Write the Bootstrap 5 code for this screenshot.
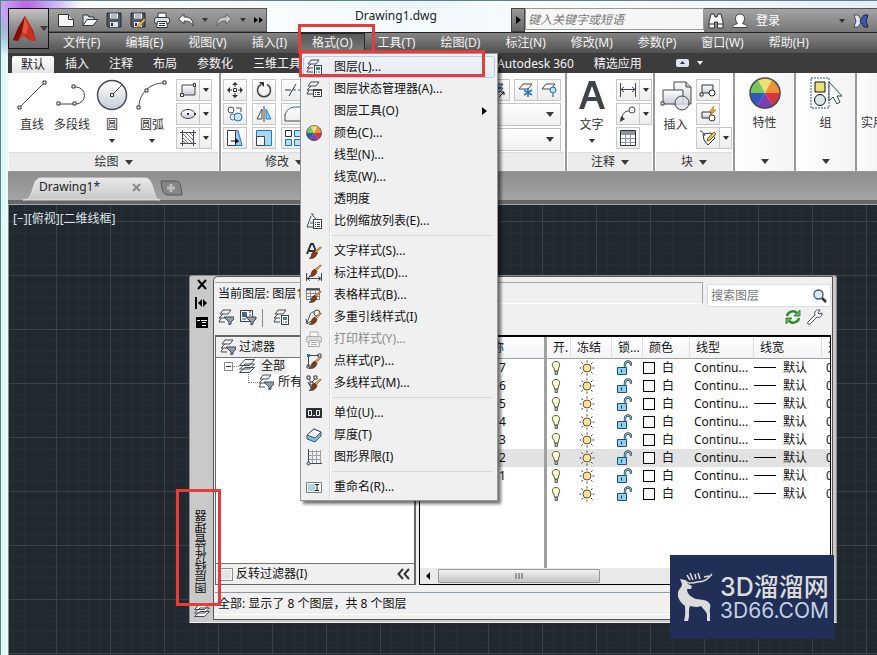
<!DOCTYPE html>
<html lang="zh-CN">
<head>
<meta charset="utf-8">
<meta name="viewport" content="width=device-width, initial-scale=1">
<title>Drawing1.dwg</title>
<link href="https://cdn.jsdelivr.net/npm/bootstrap@5.3.0/dist/css/bootstrap.min.css" rel="stylesheet">
<style>
body{font-family:"Noto Sans","Noto Sans CJK SC",sans-serif;font-size:12px;line-height:16px;color:#111;min-height:100vh;padding:7px 0 0 7px;overflow:hidden;
 background:radial-gradient(circle at 26px 6px,#c060e8 0,#c8a0f4 22px,transparent 56px),radial-gradient(circle at 4px 26px,#40e890 0,#a0f8d8 16px,transparent 28px),linear-gradient(90deg,#e0fbfb,#fff 12%,#eaf3fb 50%,#fff 60%,#e4eef8);border-top:1px solid #5c8290;border-left:1px solid #5c8290;margin:0}
button,input{font:inherit;color:inherit}
button{background:none;border:0;padding:0;line-height:16px}
svg{display:block;flex:none;overflow:visible}
.ln{fill:none;stroke:#444a55;stroke-width:1}
.ic{width:16px;height:16px}
.app-btn{width:41px;height:41px;border:1px solid #111;background:linear-gradient(#c4c4c4,#8a8a8a 50%,#686868)}
.hdr{background:#585858}
.qat{width:218px;height:24px;padding-left:9px;gap:8px;background:linear-gradient(#a2a2a2,#7c7c7c);border:1px solid #555;border-left:0}
.crt{width:0;height:0;border:3px solid transparent;border-top:4px solid #333;border-bottom:0;flex:none}
.crt-l{border-width:4px;border-top-width:5px;border-bottom:0;border-top-color:#3a3a3a}
.title-row{height:24px;background:linear-gradient(90deg,#fdfeff,#f2fafe 50%,#fff)}
.title-txt{padding-left:14px;font-size:12px;color:#222}
.s-arrow{width:14px;height:24px;background:linear-gradient(#999,#666);border:1px solid #444}
.s-in{width:179px;height:22px;border:1px solid #999;background:#f6f6f6;font-style:italic;padding:0 2px;border-radius:0;outline:0}
.s-in::placeholder{color:#777;opacity:1}
.login{width:173px;height:24px;background:linear-gradient(#a4a4a4,#777);color:#fff;padding-left:4px;border-top:1px solid #555}
.menus{height:21px;background:linear-gradient(#858585,#505050);border-top:1px solid #222;padding-left:2px;gap:1px}
.menus .mb{height:20px;padding:0 12px;color:#f2f2f2;line-height:20px}
.menus .mb.open{background:linear-gradient(#555,#7c7c7c);box-shadow:inset 0 0 0 1px #2a2a2a}
.tabs{height:20px;background:#3c3c3c;padding-left:4px}
.tabs a{color:#f4f4f4;text-decoration:none;padding:0 10px;height:20px;line-height:21px;white-space:nowrap}
.tabs a.on{background:linear-gradient(#fff,#e4e4e4);color:#222;padding:0 9px;margin-right:1px;border-radius:2px 2px 0 0;height:17px;line-height:17px;align-self:flex-end;width:42px}
.tab-gap{width:176px}
.ribbon{height:99px;background:#fff;color:#333;border-bottom:1px solid #999}
.pnl{border-right:2px solid #999;background:#fff}
.pnl-b{height:79px;padding-top:6px}
.pnl-t{height:19px;background:#ececec;margin:0 1px;gap:6px;border-top:1px solid #ddd}
.w-draw{width:213px}.w-mod{width:128px}.w-lay{width:218px}.w-ann{width:88px}.w-blk{width:80px}.w-one{width:61px}
.big{width:41px;gap:6px}
.w-draw .big{width:40px}
.big svg{width:32px;height:32px}
.sm{height:22px;border:1px solid #c8c8c8;background:linear-gradient(#fff,#ececec)}
.sm .a{width:22px;display:flex;justify-content:center}
.sm .b{width:12px;height:20px;border-left:1px solid #c8c8c8;display:flex;align-items:center;justify-content:center}
.stack{gap:2px}
.mods{gap:5px;padding-left:2px}
.one{background:linear-gradient(90deg,#fff,#f4f4f4);padding-top:4px;gap:6px}
.one .crt{margin-top:auto;margin-bottom:7px}
.one.util{padding-top:42px}
.combo{height:23px;border:1px solid #c4c4c4;border-radius:0;background:linear-gradient(#fff,#f0f0f0);padding-right:6px}
.files{height:28px;background:linear-gradient(#8e8e8e,#a4a4a4);padding-left:15px}
.ftab{width:137px;height:24px}
.ftab span{left:16px;top:3px;font-size:12px}
.band{height:5px;background:#666;border-bottom:1px solid #a5a5a5}
.stage{background-color:#212830;border-left:1px solid #888;
 background-image:linear-gradient(90deg,#3a424a 1px,transparent 1px),linear-gradient(#3a424a 1px,transparent 1px),
 linear-gradient(90deg,transparent 11px,#262e37 11px 12px,transparent 12px 22px,#262e37 22px 23px,transparent 23px 32px,#262e37 32px 33px,transparent 33px 43px,#262e37 43px 44px,transparent 44px),
 linear-gradient(transparent 11px,#262e37 11px 12px,transparent 12px 22px,#262e37 22px 23px,transparent 23px 32px,#262e37 32px 33px,transparent 33px 43px,#262e37 43px 44px,transparent 44px);
 background-size:54px 54px;background-position:47px 16px}
.view-l{color:#dfe3e8;padding:6px 4px}
.pal{left:180px;top:70px;width:648px;background:#c9c9c9;border:1px solid #8c8c8c;border-bottom-color:#eee;padding-right:3px;padding-bottom:2px;border-radius:3px 3px 0 0}
.rail{width:23px;padding:4px 0 2px}
.vt{writing-mode:vertical-rl;transform:rotate(180deg);line-height:18px;color:#111}
.pb{background:#f0f0f0;border:1px solid #555;border-radius:5px 0 0 0;padding:5px 1px 0;min-width:0}
.cur{height:22px;border:1px solid #a8a8a8;border-left:0;border-bottom-color:#fff;padding-left:3px;line-height:22px;margin-right:4px}
.find{width:124px;height:23px;margin-top:2px;border:1px solid #ddd;background:#fff;padding:0 3px}
.find input{width:96px;border:0;outline:0;padding:0;background:none}
.find input::placeholder{color:#777;opacity:1}
.tb{height:28px;gap:6px;padding:2px 8px 0 3px}
.vsep{width:1px;height:18px;background:#888}
.tree{width:201px;height:250px;border:1px solid #666;border-width:2px 2px 1px 1px;background:#fff;margin-right:3px}
.tree-h{height:21px;background:#f0f0f0;border-bottom:1px solid #777;padding-left:4px;gap:3px}
.tree-f{height:21px;background:#f0f0f0;border-top:1px solid #777;padding-left:4px}
.tree-f input{width:13px;height:13px;margin:0 3px 0 0;appearance:none;background:#e4e4e4;border:1px solid #8f8f8f;box-shadow:inset 0 0 0 1px #f6f6f6}
.node{background:#eee;padding:0 2px;margin-left:4px}
.exp{width:9px;height:9px;border:1px solid #8a8a9a;background:#fff}
.exp::after{content:"";display:block;width:5px;height:1px;background:#335;margin:3px auto}
.dots{border-top:1px dotted #888;width:6px}
.elb{border-left:1px dotted #888;border-bottom:1px dotted #888;width:10px;height:9px;align-self:flex-start}
.grid-w{height:250px;border:1px solid #000;border-top-width:2px;background:#fff;overflow:hidden}
.lt{width:420px;table-layout:fixed;border-collapse:separate;border-spacing:0}
.lt th{height:22px;background:linear-gradient(#fff,#f2f3f5);border-bottom:1px solid #a0a0a0;border-right:1px solid #dcdcdc;font-weight:400;padding:0 0 0 6px;white-space:nowrap;overflow:hidden}
.lt td{height:18px;padding:0 0 0 4px;white-space:nowrap;overflow:hidden;line-height:18px}
.lt th:first-child,.lt td:first-child{border-right:3px solid #a0a0a0}
.lt th:first-child{padding-left:60px}.lt td:first-child{padding-left:55px}
.lt tr.sel td{background:#e2e2e2}
.lt tr.fill td{height:65px}
.sw{display:inline-block;width:12px;height:12px;border:1px solid #000;background:#fff;vertical-align:-2px;margin-right:7px}
.lw{display:inline-block;width:22px;height:1px;background:#000;vertical-align:4px;margin-right:7px}
.sb{height:16px;background:#e9e9e9;padding-left:6px;gap:8px}
.thumb{width:162px;height:14px;border:1px solid #979797;border-radius:1px;background:linear-gradient(#f4f4f4,#dadada 50%,#c8c8c8)}
.status{height:23px;border-top:1px solid #8c9aa4;border-bottom:1px solid #fff;padding-left:3px;margin:7px 0 4px;line-height:22px}
.drop{left:0;top:20px;width:198px;padding:2px;background:#f0f0f0;border:1px solid #979797;box-shadow:3px 3px 3px rgba(0,0,0,.55);z-index:20;
 background-image:linear-gradient(90deg,transparent 28px,#dcdcdc 28px 29px,#fff 29px 30px,transparent 30px);color:#111}
.drop button{height:22px;padding-left:3px;gap:12px;width:100%;white-space:nowrap}
.drop button.hot{border:1px solid #aecff7;border-radius:3px;background:linear-gradient(rgba(240,244,250,.6),rgba(222,232,246,.6));padding-left:2px}
.drop .dis{color:#8c8c8c}
.drop hr{margin:3px 2px 4px 29px;border-top:1px solid #d8d8d8;opacity:1;color:inherit}
.red{border:3px solid #e63c3c;z-index:30;pointer-events:none}
.r1{left:-2px;top:-9px;width:77px;height:29px}
.r2{left:-1px;top:17px;width:186px;height:27px}
.r3{left:-14px;top:213px;width:45px;height:117px}
.wm{right:43px;top:350px;width:164px;height:84px;background:#212f57;color:#dcdcdc;padding-left:6px;font-family:Inter,"Noto Sans CJK SC",sans-serif;z-index:10}
.wm1{font-size:25px;line-height:28px;font-weight:500}
.wm2{font-size:21px;line-height:20px;color:#c3d0e6}
</style>
</head>
<body class="d-flex flex-column">
<svg width="0" height="0" class="position-absolute" aria-hidden="true">
 <defs>
 <linearGradient id="g1" x2="0" y2="1"><stop stop-color="#fff"/><stop offset="1" stop-color="#c6cdd6"/></linearGradient>
 <linearGradient id="g2" x2="0" y2="1"><stop stop-color="#e8e8e8"/><stop offset="1" stop-color="#c8c8c8"/></linearGradient>
 </defs>
 <symbol id="lay" viewBox="0 0 16 16"><path class="ln" d="M5 1h8l-3 4H2zM5 5L1 9h6M3 9l-2 4h6"/></symbol>
 <symbol id="layf" viewBox="0 0 16 16"><use href="#lay"/><path d="M6 8h10v2l-3 3v2l-2 1v-3L8 10z" fill="#8fa0b4" stroke="#3b4552"/></symbol>
 <symbol id="layp" viewBox="0 0 16 16"><use href="#lay"/><rect x="8.500" y="6.500" width="7" height="9" fill="#fff" stroke="#3b4552"/><path d="M10 8h4v3h-4z" fill="#3c78c0"/><path d="M10 13h1M12 13h2" stroke="#3b4552"/></symbol>
 <symbol id="layl" viewBox="0 0 16 16"><use href="#lay"/><rect x="7.500" y="8.500" width="8" height="7" fill="#fff" stroke="#3b4552"/><path d="M7 9h9" stroke="#3b4552" stroke-width="2"/><path d="M9 11.500h1M11 11.500h3M9 13.500h1M11 13.500h3" stroke="#3b4552"/></symbol>
 <symbol id="stk" viewBox="0 0 16 16"><path d="M6 9.500h9.500l-5 5H.5zM6 6h9.500l-5 5H.5zM6 1.500h9.500l-5 6H.5z" fill="#f4f4f4" stroke="#444a55"/></symbol>
 <symbol id="whl" viewBox="0 0 32 32"><circle cx="16" cy="16" r="15" fill="#eee"/><path d="M16 16L9 3a15 15 0 0 1 14 0z" fill="#f0e070"/><path d="M16 16L23 3a15 15 0 0 1 8 13z" fill="#ef9436"/><path d="M16 16h15a15 15 0 0 1-7 13z" fill="#d8343c"/><path d="M16 16l8 13a15 15 0 0 1-16 0z" fill="#7a3fb0"/><path d="M16 16L8 29a15 15 0 0 1-7-13z" fill="#2f58c0"/><path d="M16 16H1A15 15 0 0 1 9 3z" fill="#76c65c"/><circle cx="16" cy="16" r="15" fill="none" stroke="#4a4a55" stroke-width="1.500"/></symbol>
 <symbol id="br" viewBox="0 0 16 16"><path d="M15.500 4.500l-6 6-1.500-1.500 6-5z" fill="#eba04a" stroke="#8a4a1a" stroke-width=".6"/><path d="M9 8.500l2 2c-1 4-4 5.500-8 5 2-1 2-2 2.500-4 .7-2 2-3 3.500-3z" fill="#74401f" stroke="#472410" stroke-width=".6"/></symbol>
 <symbol id="prn" viewBox="0 0 16 16"><path d="M4 6V1h8v5" fill="#fff" stroke="currentColor"/><rect x=".5" y="5.500" width="15" height="6" rx="2" fill="#ddd" stroke="currentColor"/><path d="M3.500 9.500h9l1 6h-11z" fill="#fff" stroke="currentColor"/><path d="M5 11.500h6M5 13.500h6" stroke="currentColor"/></symbol>
 <symbol id="sav" viewBox="0 0 16 16"><path d="M1 1h14v14H2l-1-1z" fill="#4c5866" stroke="#222a33"/><path d="M4 1.500h8v5H4z" fill="#fff"/><path d="M5 3h6M5 5h6" stroke="#778"/><path d="M4 10h8v5H4z" fill="#dde2e8"/><path d="M5 11h2v3H5z" fill="#333"/></symbol>
 <symbol id="und" viewBox="0 0 16 16"><path d="M6 2v3c6 0 9 2 9 9-2-4-4-5-9-5v3L.5 7z" fill="#f4f6f8" stroke="#444"/></symbol>
 <symbol id="bulb" viewBox="0 0 10 16"><path d="M5 1.500c4 0 4.500 4 2.500 6.500L7 11H3.500L3 8C0 5.500 1 1.500 5 1.500z" fill="#fffcd0" stroke="#5a5a40"/><path d="M4 11.500h2.500v3H4z" fill="#bbb" stroke="#444" stroke-width=".8"/></symbol>
 <symbol id="sun" viewBox="0 0 16 16"><circle cx="8" cy="8" r="4" fill="#fbe29b" stroke="#6a5530"/><path d="M8 .5v2M8 13.500v2M.5 8h2M13.500 8h2M2.500 2.500L4 4M12 12l1.500 1.500M2.500 13.500L4 12M12 4l1.500-1.500" stroke="#444"/></symbol>
 <symbol id="lck" viewBox="0 0 16 16"><path d="M1.500 7.500h9v7h-9z" fill="#8fd0f0" stroke="#1c5478"/><path d="M5.500 9.500v3" stroke="#103c58"/><path d="M9 7V4.500a3 3 0 0 1 6 0V6" fill="none" stroke="#1c4460" stroke-width="2.400"/><path d="M9 7V4.500a3 3 0 0 1 6 0V6" fill="none" stroke="#c8e8f8" stroke-width=".8"/></symbol>
</svg>

<header class="hdr d-flex position-relative">
 <button class="app-btn d-flex align-items-center" aria-label="应用程序菜单"><svg width="31" height="34" viewBox="0 0 31 34"><path d="M16 4l8 14 3 11-7-1-4-4-4 1-3 4-5-1 5-12z" fill="#a81c10"/><path d="M16 4L9 16 4 28l5 1 4-9z" fill="#7e120a"/><path d="M16 4l-3 16 4 3 5-7z" fill="#e8513a"/><path d="M16 4l6 12 5 13-7-1-3-5 2-8z" fill="#c9301e"/><path d="M13 20l-4 9 3-4 5-2z" fill="#d03c28"/></svg><span class="crt crt-l"></span></button>
 <div class="flex-grow-1">
  <div class="title-row d-flex">
   <div class="qat d-flex align-items-center">
    <svg class="ic"><path d="M.5 2.500h10l5 5v7H.5z" fill="#f4f6f8" stroke="#333"/><path d="M10.500 2.500v5h5" fill="#ccc" stroke="#333"/></svg>
    <svg class="ic"><path d="M1 13V3h5l1 2h5v3" fill="#dde3ea" stroke="#333"/><path d="M1 13.500l4-6h11l-5 6z" fill="#f4f6f8" stroke="#333"/></svg>
    <svg class="ic"><use href="#sav"/></svg>
    <svg class="ic"><use href="#sav"/><path d="M15.500 8l-6 7-2 .5.500-2 6-7z" fill="#f7c04a" stroke="#7a4a10" stroke-width=".7"/></svg>
    <svg class="ic" color="#30363d"><use href="#prn"/></svg>
    <svg class="ic"><use href="#und"/></svg>
    <span class="crt"></span>
    <svg class="ic" opacity=".55"><use href="#und" transform="matrix(-1 0 0 1 16 0)"/></svg>
    <span class="crt"></span>
    <svg width="9" height="8"><path d="M0 1l4 3-4 3zM5 1l4 3-4 3z" fill="#000"/></svg>
   </div>
   <div class="title-txt flex-grow-1 text-center">Drawing1.dwg</div>
   <button class="s-arrow d-flex align-items-center justify-content-center" aria-label="展开"><svg width="5" height="8"><path d="M0 0l5 4-5 4z"/></svg></button>
   <input class="s-in" type="text" placeholder="键入关键字或短语" aria-label="键入关键字或短语">
   <div class="login d-flex align-items-center gap-2">
    <svg class="ic"><path d="M3 1h3l1 3h2l1-3h3l2 8v6H9.500V9h-3v6H1V9z" fill="#f0f2f4" stroke="#333"/><path d="M1 11h5.500M9.500 11H15" stroke="#333"/></svg>
    <svg class="ic"><path d="M.5 14.500c0-3 3-3 5-4-3-3-3-9.500 2.500-9.500s5.500 6.500 2.500 9.500c2 1 5 1 5 4z" fill="#fff" stroke="#444"/></svg>
    <a href="#" class="text-white text-decoration-none">登录</a>
    <span class="crt ms-auto"></span>
    <svg width="16" height="16" class="me-2"><path d="M1 2h4l4 6-4 6H1l2-6z" fill="#dfe6f4" stroke="#334" stroke-width=".8"/><path d="M15 2h-4L7 8l4 6h4l-2-6z" fill="#3a58b4" stroke="#223"/></svg>
   </div>
  </div>
  <nav class="menus d-flex" aria-label="菜单">
   <button class="mb">文件(F)</button><button class="mb">编辑(E)</button><button class="mb">视图(V)</button><button class="mb">插入(I)</button>
   <div class="position-relative">
    <button class="mb open">格式(O)</button>
    <div class="drop position-absolute">
     <button class="hot d-flex align-items-center"><svg class="ic"><use href="#layp"/></svg>图层(L)...</button>
     <button class="d-flex align-items-center"><svg class="ic"><use href="#layl"/></svg>图层状态管理器(A)...</button>
     <button class="d-flex align-items-center"><span class="ic"></span>图层工具(O)<svg class="ms-auto me-2" width="5" height="8"><path d="M0 0l5 4-5 4z"/></svg></button>
     <button class="d-flex align-items-center"><svg class="ic"><use href="#whl"/></svg>颜色(C)...</button>
     <button class="d-flex align-items-center"><span class="ic"></span>线型(N)...</button>
     <button class="d-flex align-items-center"><span class="ic"></span>线宽(W)...</button>
     <button class="d-flex align-items-center"><span class="ic"></span>透明度</button>
     <button class="d-flex align-items-center"><svg class="ic"><path class="ln" d="M5 1h2v2l3 3M5 3L1 14h6M4 10h3"/><rect x="7.500" y="6.500" width="8" height="9" fill="#fff" stroke="#3b4552"/><path d="M9 9.500h1M11 9.500h3M9 11.500h1M11 11.500h3M9 13.500h1M11 13.500h3" stroke="#3b4552"/></svg>比例缩放列表(E)...</button>
     <hr>
     <button class="d-flex align-items-center"><svg class="ic"><path d="M1 11L5 1h2l4 10M3 8h6" fill="none" stroke="#2f343b" stroke-width="2"/><use href="#br"/></svg>文字样式(S)...</button>
     <button class="d-flex align-items-center"><svg class="ic"><path class="ln" d="M.5 8v8M15.500 8v8M1 13.500h14M4 11.500l-3 2 3 2M12 11.500l3 2-3 2"/><use href="#br" y="-4"/></svg>标注样式(D)...</button>
     <button class="d-flex align-items-center"><svg class="ic"><path d="M.5 1.500h13v11H.5z" fill="#fff" stroke="#777e8a"/><path d="M0 2.500h14" stroke="#444a55" stroke-width="2"/><path d="M0 6.500h13M0 9.500h13M4.500 4v8M9.500 4v8" fill="none" stroke="#8a919c"/><use href="#br"/></svg>表格样式(B)...</button>
     <button class="d-flex align-items-center"><svg class="ic"><path class="ln" d="M1 14L4 6c1-3 3-3 4-3M0 10l1 5 4-3"/><circle cx="11" cy="4" r="3" class="ln"/><use href="#br"/></svg>多重引线样式(I)</button>
     <button class="dis d-flex align-items-center"><svg class="ic" color="#aaa"><use href="#prn"/></svg>打印样式(Y)...</button>
     <button class="d-flex align-items-center"><svg class="ic"><path class="ln" d="M2.500 2v12M3 2.500h10"/><path d="M1 1h3v3H1z" fill="#1c7ad0"/><path d="M12 1h3v3h-3zM1 12h3v3H1z" class="ln"/><use href="#br"/></svg>点样式(P)...</button>
     <button class="d-flex align-items-center"><svg class="ic"><path class="ln" d="M2 2l3 6 5-5M2 7l3 6 7-6"/><path d="M1 1h3v3H1zM8 1h3v3H8zM4 7h3v3H4z" fill="#fff" stroke="#333"/><use href="#br"/></svg>多线样式(M)...</button>
     <hr>
     <button class="d-flex align-items-center"><svg class="ic"><rect y="3" width="16" height="10" rx="1" fill="#2c3036"/><path d="M2.500 5.500h3v5h-3zM10.500 5.500h3v5h-3z" fill="none" stroke="#fff"/><path d="M7 10h2v1H7z" fill="#fff"/></svg>单位(U)...</button>
     <button class="d-flex align-items-center"><svg class="ic"><path d="M1 8l7-6 7 3v4l-6 6-8-3z" fill="#79bfe8" stroke="#3c5468"/><path d="M1 8l7-6 7 3-6 6z" fill="#fff" stroke="#3c5468"/></svg>厚度(T)</button>
     <button class="d-flex align-items-center"><svg class="ic"><path d="M2.500 1v13M6.500 1v13M10.500 1v13M14.500 1v13M2 2.500h13M2 6.500h13M2 10.500h13" stroke="#99a0aa"/><path class="ln" d="M2.500 0v14.500H16"/><circle cx="2.500" cy="14.500" r="1.500" fill="#cde" stroke="#246"/></svg>图形界限(I)</button>
     <hr>
     <button class="d-flex align-items-center"><svg class="ic"><path d="M.5 3.500h15v10H.5z" fill="#fff" stroke="#777e8a"/><path d="M2 5h7v7H2z" fill="#a8d8f0"/><path d="M9 5.500h4M9 11.500h4M11 6v5" stroke="#222"/></svg>重命名(R)...</button>
    </div>
    <div class="red r1 position-absolute"></div>
    <div class="red r2 position-absolute"></div>
   </div>
   <button class="mb">工具(T)</button><button class="mb">绘图(D)</button><button class="mb">标注(N)</button><button class="mb">修改(M)</button><button class="mb">参数(P)</button><button class="mb">窗口(W)</button><button class="mb">帮助(H)</button>
  </nav>
 </div>
</header>

<nav class="tabs d-flex" aria-label="功能区">
 <a href="#" class="on">默认</a><a href="#">插入</a><a href="#">注释</a><a href="#">布局</a><a href="#">参数化</a><a href="#">三维工具</a><span class="tab-gap"></span><a href="#">Autodesk 360</a><a href="#">精选应用</a>
 <span class="d-flex align-items-center gap-2 ms-4"><svg width="13" height="8"><rect width="13" height="8" rx="2" fill="#dfe3ee"/><path d="M4 5l2.500-3L9 5z" fill="#333"/></svg><svg width="6" height="4"><path d="M0 0h6L3 4z" fill="#eee"/></svg></span>
</nav>

<div class="ribbon d-flex">
 <section class="pnl w-draw flex-shrink-0">
  <div class="pnl-b d-flex ps-1">
   <button class="big d-flex flex-column align-items-center"><svg viewBox="0 0 32 32"><path class="ln" stroke-width="1.500" d="M4 28L28 4"/><path d="M2 27h3v3H2zM27 2h3v3h-3z" fill="#fff" stroke="#333"/></svg>直线</button>
   <button class="big d-flex flex-column align-items-center"><svg viewBox="0 0 32 32"><path class="ln" stroke-width="1.500" d="M3 25h17a8 8 0 0 0 0-17h-2"/><path d="M1 23h3v3H1zM17 23h3v3h-3zM16 6h3v3h-3z" fill="#fff" stroke="#333"/></svg>多段线</button>
   <button class="big d-flex flex-column align-items-center"><svg viewBox="0 0 32 32"><circle cx="16" cy="16" r="14.500" fill="url(#g1)" stroke="#444a55" stroke-width="1.500"/><path class="ln" d="M16 16L26 6"/><path d="M14.500 14.500h3v3h-3z" fill="#fff" stroke="#333"/></svg>圆<span class="crt"></span></button>
   <button class="big d-flex flex-column align-items-center me-1"><svg viewBox="0 0 32 32"><path class="ln" stroke-width="1.500" d="M3 28C3 14 14 4 28 4"/><path d="M1 27h3v3H1zM9 10h3v3H9zM27 2h3v3h-3z" fill="#fff" stroke="#333"/></svg>圆弧<span class="crt"></span></button>
   <div class="stack d-flex flex-column">
    <button class="sm d-flex align-items-center" aria-label="矩形"><span class="a"><svg class="ic"><path d="M2 3h13v10H2z" fill="url(#g1)" stroke="#444"/><path d="M.5 11.500h3v3h-3zM13.500 1.500h2v3h-2z" fill="#fff" stroke="#333"/></svg></span><span class="b"><i class="crt"></i></span></button>
    <button class="sm d-flex align-items-center" aria-label="椭圆"><span class="a"><svg class="ic"><ellipse cx="8" cy="8" rx="7" ry="4.500" fill="url(#g1)" stroke="#444"/><path d="M7 7h2v2H7zM7 3h2v1H7zM14 7h2v2h-2z" fill="#333"/></svg></span><span class="b"><i class="crt"></i></span></button>
    <button class="sm d-flex align-items-center" aria-label="图案填充"><span class="a"><svg class="ic"><path class="ln" d="M2.500 0v16M13.500 0v16M0 2.500h16M0 13.500h16"/><path d="M3 8l5 5M3 4l9 9M6 3l7 7M10 3l3 3M3 11l2 2" stroke="#777" fill="none"/></svg></span><span class="b"><i class="crt"></i></span></button>
   </div>
  </div>
  <div class="pnl-t d-flex align-items-center justify-content-center">绘图<i class="crt crt-l"></i></div>
 </section>
 <section class="pnl w-mod flex-shrink-0">
  <div class="pnl-b mods d-flex">
   <div class="stack d-flex flex-column">
    <button class="sm" aria-label="移动"><span class="a"><svg class="ic"><path d="M6.500 6.500h3v3h-3z" fill="#fff" stroke="#333"/><path d="M8 0l3 3H5zM8 16l3-3H5zM0 8l3-3v6zM16 8l-3-3v6zM7.500 3h1v2h-1zM7.500 11h1v2h-1zM3 7.500h2v1H3zM11 7.500h2v1h-2z" fill="#333"/></svg></span></button>
    <button class="sm" aria-label="复制"><span class="a"><svg class="ic"><circle cx="4" cy="4" r="3" class="ln"/><circle cx="6" cy="11" r="3" fill="#fff" stroke="#2a78b8"/><circle cx="11" cy="11" r="4" fill="#c8e6f8" stroke="#1f6fb0"/><path d="M9 2h5v4" class="ln"/></svg></span></button>
    <button class="sm" aria-label="拉伸"><span class="a"><svg class="ic"><path d="M8 .5h3l4 15H8" fill="#8fcaf0" stroke="#2a78b8"/><path d="M.5.500h8v15h-8z" fill="#fff" stroke="#444"/><path d="M4 11h5" stroke="#000"/><path d="M8 8l4 3-4 3z"/></svg></span></button>
   </div>
   <div class="stack d-flex flex-column">
    <button class="sm" aria-label="旋转"><span class="a"><svg class="ic"><path d="M5 2.500a6.500 6.500 0 1 0 6 0" fill="none" stroke="#444" stroke-width="1.600"/><path d="M3 0h5v5z" fill="#333"/></svg></span></button>
    <button class="sm" aria-label="镜像"><span class="a"><svg class="ic"><path d="M6 3v10H1z" fill="#fff" stroke="#444"/><path d="M10 3v10h5z" fill="#8fcaf0" stroke="#2a78b8"/><path d="M8 0v16" stroke="#444"/></svg></span></button>
    <button class="sm" aria-label="缩放"><span class="a"><svg class="ic"><path d="M.5.500h15v15H.5z" fill="#a4d8f4" stroke="#2a78b8"/><path d="M.5 6.500h8v9h-8z" fill="#fff" stroke="#444"/></svg></span></button>
   </div>
   <div class="stack d-flex flex-column">
    <button class="sm" aria-label="修剪"><span class="a"><svg class="ic"><path d="M0 8h6M11 2L4 14" stroke="#333"/><path d="M8 8h8" stroke="#1f6fb0" stroke-dasharray="3 2"/></svg></span></button>
    <button class="sm" aria-label="圆角"><span class="a"><svg class="ic"><path class="ln" d="M0 15V8"/><path d="M0 9q2-7 9-8h7" fill="none" stroke="#1f6fb0"/><path class="ln" d="M0 15h16"/></svg></span></button>
    <button class="sm" aria-label="阵列"><span class="a"><svg class="ic"><path d="M.5.500h6v6h-6z" fill="#fff" stroke="#333"/><path d="M9.500.5h6v6h-6zM.5 9.500h6v6h-6zM9.500 9.500h6v6h-6z" fill="#b8e0f6" stroke="#1f6fb0"/></svg></span></button>
   </div>
  </div>
  <div class="pnl-t d-flex align-items-center justify-content-center">修改<i class="crt crt-l"></i></div>
 </section>
 <section class="pnl w-lay flex-shrink-0 d-flex flex-column">
  <div class="pnl-b d-flex flex-column stack px-1">
   <div class="d-flex justify-content-end">
    <button class="sm me-1" aria-label="匹配图层"><span class="a"><svg class="ic"><path d="M7 2h6l-3 4H3zM7 6h6l-3 4H3z" fill="#9fc6e6" stroke="#345"/><path d="M9 15l5-5M11 10h3v3" fill="none" stroke="#000"/></svg></span></button>
    <button class="sm" aria-label="冻结图层"><span class="a"><svg class="ic"><path d="M5 2h9l-4 5H1z" fill="#fff" stroke="#444"/><path d="M10 6v9M6 8l8 5M14 8l-8 5" stroke="#1f78c0" stroke-width="1.500"/></svg></span></button>
    <button class="sm border-start-0" aria-label="关闭图层"><span class="a"><svg class="ic"><path d="M5 2h9l-4 5H1z" fill="#fff" stroke="#444"/><circle cx="12" cy="8" r="3" fill="#b8def4" stroke="#2a68a0"/><path d="M11 11h2v4h-2z" fill="#89a"/></svg></span></button>
   </div>
   <button class="combo d-flex align-items-center justify-content-end" aria-label="当前图层"><i class="crt crt-l"></i></button>
   <button class="combo d-flex align-items-center justify-content-end" aria-label="图层状态"><i class="crt crt-l"></i></button>
  </div>
  <div class="pnl-t"></div>
 </section>
 <section class="pnl w-ann flex-shrink-0">
  <div class="pnl-b d-flex ps-1">
   <button class="big d-flex flex-column align-items-center me-1"><svg viewBox="0 0 32 32"><path d="M3 30L13 2h6l10 28h-5l-3-8H11l-3 8zm9-12h8L16 7z" fill="#3f444c"/></svg>文字<span class="crt"></span></button>
   <div class="stack d-flex flex-column align-items-start">
    <button class="sm d-flex align-items-center" aria-label="线性"><span class="a"><svg class="ic"><path class="ln" d="M.5 1v14M15.500 1v14M1 7.500h14M4 5L1 7.500 4 10M12 5l3 2.500-3 2.500"/></svg></span><span class="b"><i class="crt"></i></span></button>
    <button class="sm d-flex align-items-center" aria-label="引线"><span class="a"><svg class="ic"><path class="ln" d="M1 14C3 8 4 5 9 5"/><circle cx="12" cy="4" r="3" class="ln"/><path d="M0 16l1-6 4 3z" fill="#333"/></svg></span><span class="b"><i class="crt"></i></span></button>
    <button class="sm" aria-label="表格"><span class="a"><svg class="ic"><path d="M.5.500h15v15H.5z" fill="#fff" stroke="#333"/><path d="M1 1h14v3H1z" fill="#8a93a0"/><path d="M1 4.500h14M1 8.500h14M1 12.500h14M5.500 4v11M10.500 4v11" stroke="#8a93a0"/></svg></span></button>
   </div>
  </div>
  <div class="pnl-t d-flex align-items-center justify-content-center">注释<i class="crt crt-l"></i></div>
 </section>
 <section class="pnl w-blk flex-shrink-0">
  <div class="pnl-b d-flex">
   <button class="big d-flex flex-column align-items-center"><svg viewBox="0 0 32 32"><path d="M14 3h12l5 5v17H14z" fill="url(#g1)" stroke="#444"/><path d="M26 3v5h5" fill="#ccc" stroke="#444"/><path d="M3 11h20v14H3z" fill="url(#g1)" stroke="#444"/><circle cx="22" cy="24" r="7" fill="#dde2e8" fill-opacity=".8" stroke="#444"/><path d="M1 23h3v3H1z" fill="#fff" stroke="#333"/></svg>插入</button>
   <div class="stack d-flex flex-column align-items-start">
    <button class="sm" aria-label="创建块"><span class="a"><svg class="ic"><path d="M2 3h11v8H2z" fill="url(#g1)" stroke="#333"/><circle cx="12" cy="11" r="3" fill="#fff" stroke="#333"/><path d="M0 11h3v3H0z" fill="#fff" stroke="#333"/></svg></span></button>
    <button class="sm" aria-label="编辑块"><span class="a"><svg class="ic"><path d="M2 6h9v6H2z" fill="url(#g1)" stroke="#333"/><circle cx="12" cy="12" r="3" fill="#fff" stroke="#333"/><path d="M14 0L9 6h3l-2 4 6-6h-3z" fill="#f2a03a" stroke="#b06010" stroke-width=".5"/></svg></span></button>
    <button class="sm d-flex align-items-center" aria-label="编辑属性"><span class="a"><svg class="ic"><path d="M3 4l8-1 4 5-7 7-4-5z" fill="#fff" stroke="#333"/><path class="ln" d="M0 1c2 0 4 2 5 5"/><path d="M14 2l-6 6-1 3 3-1 6-6z" fill="#f2c43a" stroke="#5a3a10" stroke-width=".8"/></svg></span><span class="b"><i class="crt"></i></span></button>
   </div>
  </div>
  <div class="pnl-t d-flex align-items-center justify-content-center">块<i class="crt crt-l"></i></div>
 </section>
 <button class="pnl one w-one flex-shrink-0 d-flex flex-column align-items-center"><svg width="32" height="32"><use href="#whl"/></svg>特性<i class="crt crt-l"></i></button>
 <button class="pnl one w-one flex-shrink-0 d-flex flex-column align-items-center"><svg width="32" height="32"><path d="M1 1h18v30H1z" fill="none" stroke="#2a5a9a" stroke-dasharray="2 1"/><path d="M5 5h10v10H5z" fill="#ece07a" stroke="#111"/><circle cx="10" cy="23" r="5.500" fill="#d6e8e8" stroke="#111"/><path d="M19 5v19l4-4 4 7 3-2-3-6h5z" fill="#fff" stroke="#234a60"/></svg>组<i class="crt crt-l"></i></button>
 <button class="one util flex-grow-1 d-flex align-items-start overflow-hidden text-nowrap ps-1">实用工具</button>
</div>

<div class="files d-flex align-items-end">
 <a href="#" class="ftab position-relative d-block text-dark"><svg width="137" height="24"><path d="M0 24c8 0 8-6 11-15 2-5 3-7 8-7h102c5 0 6 2 8 7 3 9 3 15 8 15z" fill="url(#g2)" stroke="#eee" stroke-width=".8"/><path d="M110 8l7 7M117 8l-7 7" stroke="#888" stroke-width="2"/></svg><span class="position-absolute">Drawing1*</span></a>
 <button class="mb-1" aria-label="新建"><svg width="22" height="16"><path d="M1 1h14c5 0 6 3 7 14H8C3 15 2 10 1 1z" fill="#858585" stroke="#555"/><path d="M11 4v8M7 8h8" stroke="#bbb" stroke-width="3"/></svg></button>
</div>
<div class="band"></div>

<main class="stage flex-grow-1 position-relative">
 <div class="view-l">[−][俯视][二维线框]</div>
 <section class="pal position-absolute d-flex" aria-label="图层特性管理器">
  <div class="rail d-flex flex-column align-items-center flex-shrink-0 gap-2">
   <button aria-label="关闭"><svg width="10" height="9"><path d="M1 0l8 9M9 0L1 9" stroke="#000" stroke-width="2"/></svg></button>
   <button aria-label="自动隐藏"><svg width="13" height="12"><path d="M0 0h2v12H0z"/><path d="M3 6l4-4v8zM12 6L8 2v8z"/></svg></button>
   <button aria-label="特性"><svg width="12" height="11"><path d="M0 0h12v11H0z"/><path d="M5 3h6v1H5zM6 5h4v1H6zM6 8h4v1H6zM1 3h3v1H1z" fill="#fff"/></svg></button>
   <span class="vt mt-auto">图层特性管理器</span>
   <svg class="ic"><use href="#stk"/></svg>
  </div>
  <div class="pb flex-grow-1">
   <div class="d-flex">
    <div class="cur flex-grow-1">当前图层: 图层1</div>
    <div class="find d-flex align-items-center justify-content-between"><input type="text" placeholder="搜索图层" aria-label="搜索图层"><svg width="14" height="14"><circle cx="5.500" cy="5.500" r="4.500" fill="#d8ecf8" stroke="#456" stroke-width="1.300"/><path d="M9 9l4 4" stroke="#333" stroke-width="2.500"/></svg></div>
   </div>
   <div class="tb d-flex align-items-start">
    <svg class="ic"><use href="#layf"/></svg>
    <svg class="ic"><path d="M.5 1.500h12v11H.5z" fill="#fff" stroke="#345"/><path d="M2 3h5v5H2z" fill="#3c6898"/><path d="M9 3h2M9 6h2M2 10h4" stroke="#345"/><path d="M6 8h10v2l-3 3v2l-2 1v-3L8 10z" fill="#8fa0b4" stroke="#3b4552"/></svg>
    <span class="vsep"></span>
    <svg class="ic ms-1"><use href="#layp"/></svg>
    <svg class="ic ms-auto"><path d="M2 7a6 6 0 0 1 10-3M14 9a6 6 0 0 1-10 3" fill="none" stroke="#2c8a2c" stroke-width="2.500"/><path d="M15 1v6H9zM1 15V9h6z" fill="#5cc050" stroke="#1e6a1e" stroke-width=".8"/></svg>
    <svg class="ic"><path d="M1 13l7-7c-1-3 1-6 5-5l-2 3 1 1 3-1c0 4-3 5-5 4l-7 7c-2 1-3-1-2-2z" fill="#fff" stroke="#444a55"/></svg>
   </div>
   <div class="d-flex">
    <div class="tree d-flex flex-column flex-shrink-0">
     <div class="tree-h d-flex align-items-center"><svg class="ic"><use href="#layf"/></svg>过滤器</div>
     <div class="flex-grow-1 ps-2">
      <div class="d-flex align-items-center"><span class="exp"></span><span class="dots"></span><svg class="ic"><use href="#stk"/></svg><span class="node">全部</span></div>
      <div class="d-flex align-items-center ms-4"><span class="elb"></span><svg class="ic"><use href="#layf"/></svg><span class="ms-1">所有使用的图层</span></div>
     </div>
     <div class="tree-f d-flex align-items-center"><input type="checkbox" id="inv"><label for="inv">反转过滤器(I)</label><svg class="ms-auto me-1" width="13" height="10"><path d="M6 0L1.500 5 6 10M12 0L7.500 5l4.500 5" fill="none" stroke="#333" stroke-width="2"/></svg></div>
    </div>
    <div class="grid-w flex-grow-1 d-flex flex-column">
     <table class="lt">
      <colgroup><col width="127"><col width="24"><col width="41"><col width="31"><col width="47"><col width="64"><col width="68"><col width="18"></colgroup>
      <thead><tr><th>名称</th><th>开.</th><th>冻结</th><th>锁...</th><th>颜色</th><th>线型</th><th>线宽</th><th>透</th></tr></thead>
      <tbody>
      <tr><td>图层7</td><td><svg width="10" height="16"><use href="#bulb"/></svg></td><td><svg class="ic ms-1"><use href="#sun"/></svg></td><td><svg class="ic"><use href="#lck"/></svg></td><td class="ps-0"><i class="sw"></i>白</td><td>Continu...</td><td class="ps-0"><i class="lw"></i>默认</td><td>0</td></tr>
      <tr><td>图层6</td><td><svg width="10" height="16"><use href="#bulb"/></svg></td><td><svg class="ic ms-1"><use href="#sun"/></svg></td><td><svg class="ic"><use href="#lck"/></svg></td><td class="ps-0"><i class="sw"></i>白</td><td>Continu...</td><td class="ps-0"><i class="lw"></i>默认</td><td>0</td></tr>
      <tr><td>图层5</td><td><svg width="10" height="16"><use href="#bulb"/></svg></td><td><svg class="ic ms-1"><use href="#sun"/></svg></td><td><svg class="ic"><use href="#lck"/></svg></td><td class="ps-0"><i class="sw"></i>白</td><td>Continu...</td><td class="ps-0"><i class="lw"></i>默认</td><td>0</td></tr>
      <tr><td>图层4</td><td><svg width="10" height="16"><use href="#bulb"/></svg></td><td><svg class="ic ms-1"><use href="#sun"/></svg></td><td><svg class="ic"><use href="#lck"/></svg></td><td class="ps-0"><i class="sw"></i>白</td><td>Continu...</td><td class="ps-0"><i class="lw"></i>默认</td><td>0</td></tr>
      <tr><td>图层3</td><td><svg width="10" height="16"><use href="#bulb"/></svg></td><td><svg class="ic ms-1"><use href="#sun"/></svg></td><td><svg class="ic"><use href="#lck"/></svg></td><td class="ps-0"><i class="sw"></i>白</td><td>Continu...</td><td class="ps-0"><i class="lw"></i>默认</td><td>0</td></tr>
      <tr class="sel"><td>图层2</td><td><svg width="10" height="16"><use href="#bulb"/></svg></td><td><svg class="ic ms-1"><use href="#sun"/></svg></td><td><svg class="ic"><use href="#lck"/></svg></td><td class="ps-0"><i class="sw"></i>白</td><td>Continu...</td><td class="ps-0"><i class="lw"></i>默认</td><td>0</td></tr>
      <tr><td>图层1</td><td><svg width="10" height="16"><use href="#bulb"/></svg></td><td><svg class="ic ms-1"><use href="#sun"/></svg></td><td><svg class="ic"><use href="#lck"/></svg></td><td class="ps-0"><i class="sw"></i>白</td><td>Continu...</td><td class="ps-0"><i class="lw"></i>默认</td><td>0</td></tr>
      <tr><td></td><td><svg width="10" height="16"><use href="#bulb"/></svg></td><td><svg class="ic ms-1"><use href="#sun"/></svg></td><td><svg class="ic"><use href="#lck"/></svg></td><td class="ps-0"><i class="sw"></i>白</td><td>Continu...</td><td class="ps-0"><i class="lw"></i>默认</td><td>0</td></tr>
      <tr class="fill"><td></td><td colspan="7"></td></tr>
      </tbody>
     </table>
     <div class="sb d-flex align-items-center mt-auto"><svg width="4" height="8"><path d="M4 0v8L0 4z"/></svg><div class="thumb d-flex align-items-center justify-content-center"><svg width="8" height="6"><path d="M1 0v6M4 0v6M7 0v6" stroke="#555"/></svg></div></div>
    </div>
   </div>
   <div class="status">全部: 显示了 8 个图层，共 8 个图层</div>
  </div>
  <div class="red r3 position-absolute"></div>
 </section>
 <div class="wm position-absolute d-flex align-items-center">
  <svg width="40" height="52" viewBox="0 0 40 52"><path d="M4 8l5 1 3 4 4 2-1 3-4 0c0 5 4 8 9 10 5 1 11 0 14 5 1 5-1 6 0 9l0 8h-3l0-7c-1-3-4-5-6-8-5 2-9 0-11 0-2 5 0 9-2 15H8c2-7 1-10 1-15-4-3-8-8-7-13 0-4 4-5 4-9z" fill="#dcdcdc"/><path d="M9 9c0 3 6 4 12 2 8 0 11-3 15-8M14 9L11 4M17 9L14 2M20 8l-1-5M24 8l-2-6M28 6l5-1" fill="none" stroke="#dcdcdc" stroke-width="1.500"/></svg>
  <div class="ms-1"><div class="wm1">3D溜溜网</div><div class="wm2">3D66.COM</div></div>
 </div>
</main>
<script src="https://cdn.jsdelivr.net/npm/bootstrap@5.3.0/dist/js/bootstrap.bundle.min.js"></script>
</body>
</html>
